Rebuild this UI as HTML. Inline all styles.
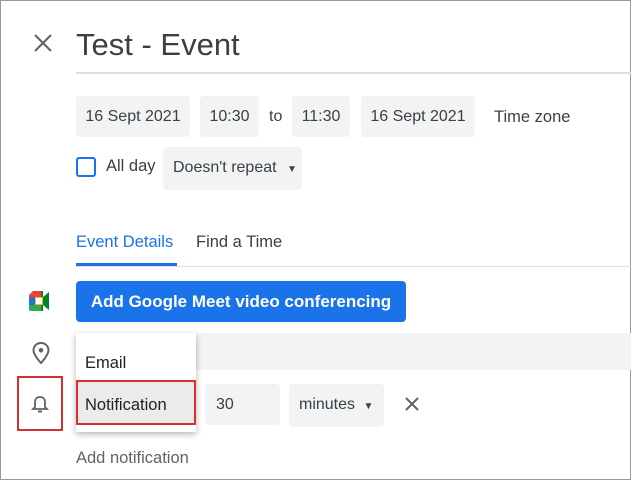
<!DOCTYPE html>
<html><head><style>
body{margin:0;width:631px;height:480px;overflow:hidden;font-family:"Liberation Sans",Arial,sans-serif;color:#3c4043;background:#fff}
.frame{position:absolute;left:0;top:0;width:629px;height:478px;border:1px solid #999}
.a{position:absolute}
.chip{position:absolute;background:#f1f3f4;border-radius:4px;font-size:16px;line-height:41px;text-align:center;color:#3c4043}
</style></head><body>
<div class="frame"></div>
<svg class="a" style="left:33px;top:33px" width="20" height="20"><path d="M2 2L18 18M18 2L2 18" stroke="#5f6368" stroke-width="2"/></svg>
<div class="a" style="left:76px;top:27px;font-size:31px;color:#3c4043">Test - Event</div>
<div class="a" style="left:76px;top:72px;width:555px;height:2px;background:#e0e0e0"></div>
<div class="chip" style="left:76px;top:96px;width:114px">16 Sept 2021</div>
<div class="chip" style="left:200px;top:96px;width:59px">10:30</div>
<div class="a" style="left:269px;top:108px;font-size:16px">to</div>
<div class="chip" style="left:292px;top:96px;width:58px">11:30</div>
<div class="chip" style="left:361px;top:96px;width:114px">16 Sept 2021</div>
<div class="a" style="left:494px;top:108px;font-size:16.5px">Time zone</div>
<div class="a" style="left:76px;top:157px;width:16px;height:16px;border:2px solid #1a73e8;border-radius:3px"></div>
<div class="a" style="left:106px;top:157px;font-size:16.5px">All day</div>
<div class="chip" style="left:163px;top:147px;width:139px;text-align:left;text-indent:10px">Doesn't repeat <span style="font-size:10px;margin-left:6px">▼</span></div>
<div class="a" style="left:76px;top:233px;font-size:16.5px;color:#1a73e8">Event Details</div>
<div class="a" style="left:196px;top:233px;font-size:16.5px">Find a Time</div>
<div class="a" style="left:76px;top:263px;width:101px;height:3px;background:#1a73e8"></div>
<div class="a" style="left:76px;top:266px;width:555px;height:1px;background:#e0e0e0"></div>
<svg class="a" style="left:29px;top:291px" width="24" height="20" viewBox="0 0 24 20"><path d="M4 0H14V6H0V4z" fill="#ea4335"/><path d="M0 6H6V14H0z" fill="#1a73e8"/><path d="M0 14H14V20H2Q0 20 0 18z" fill="#34a853"/><path d="M14 0V6L20 1V19L14 14V20H12V0z" fill="#00832d"/><path d="M6 6H14V14H6z" fill="#fbbc04"/><path d="M7 7H13V13H7z" fill="#fff"/></svg>
<div class="a" style="left:76px;top:281px;width:330px;height:41px;background:#1a73e8;border-radius:4px;color:#fff;font-size:17px;font-weight:bold;line-height:41px;text-align:center">Add Google Meet video conferencing</div>
<svg class="a" style="left:32px;top:342px" width="18" height="22" viewBox="0 0 18 22"><path d="M9 1C4.5 1 1.5 4.3 1.5 8.3 1.5 13 9 21 9 21S16.5 13 16.5 8.3C16.5 4.3 13.5 1 9 1z" fill="none" stroke="#5f6368" stroke-width="2"/><circle cx="9" cy="8.3" r="2.3" fill="#5f6368"/></svg>
<div class="a" style="left:76px;top:333px;width:555px;height:37px;background:#f1f3f4"></div>
<div class="a" style="left:17px;top:376px;width:42px;height:51px;border:2px solid #d32f2f"></div>
<svg class="a" style="left:31px;top:394px" width="18" height="20" viewBox="0 0 18 20"><path d="M2 15H16L14 13V8C14 5 12 3 9 3S4 5 4 8V13z" fill="none" stroke="#5f6368" stroke-width="1.8"/><path d="M7 17.5H11" stroke="#5f6368" stroke-width="2"/></svg>
<div class="chip" style="left:205px;top:384px;width:75px;text-align:left;text-indent:11px">30</div>
<div class="chip" style="left:289px;top:384px;width:95px;text-align:left;text-indent:10px">minutes <span style="font-size:10px;margin-left:4px">▼</span></div>
<svg class="a" style="left:405px;top:397px" width="14" height="14"><path d="M1 1L13 13M13 1L1 13" stroke="#5f6368" stroke-width="2"/></svg>
<div class="a" style="left:76px;top:333px;width:120px;height:99px;background:#fff;box-shadow:0 2px 6px rgba(0,0,0,.3)"></div>
<div class="a" style="left:85px;top:354px;font-size:16.5px;color:#202124">Email</div>
<div class="a" style="left:76px;top:380px;width:116px;height:41px;background:#ebebeb;border:2px solid #d32f2f"></div>
<div class="a" style="left:85px;top:396px;font-size:16.5px;color:#202124">Notification</div>
<div class="a" style="left:76px;top:449px;font-size:16.5px;color:#5f6368">Add notification</div>
</body></html>
